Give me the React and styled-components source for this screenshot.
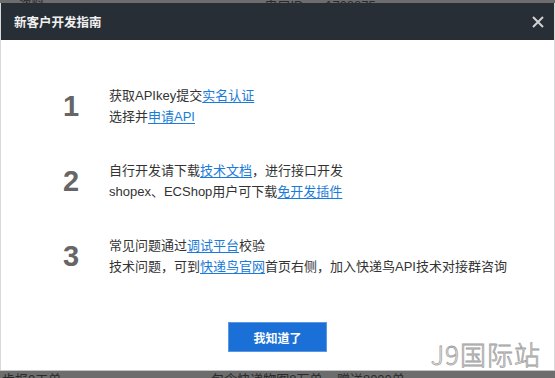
import React from "react";
import styled, { createGlobalStyle } from "styled-components";

const Global = createGlobalStyle`
  html, body { margin: 0; padding: 0; background: #6b6b6b; }
  body { font-family: "Liberation Sans", "Noto Sans CJK SC", sans-serif; }
  * { box-sizing: border-box; }
`;

const Page = styled.div`
  width: 555px;
  height: 378px;
  display: flex;
  flex-direction: column;
  overflow: hidden;
  position: relative;
`;

const Strip = styled.div`
  height: ${(p) => p.$h}px;
  min-height: 0;
  flex: none;
  background: #6d6d6d;
  overflow: hidden;
  display: flex;
  align-items: ${(p) => (p.$top ? "flex-end" : "flex-start")};
  border-top: ${(p) => (p.$top ? "none" : "1px solid #c4c4c4")};
  font-size: 13px;
  line-height: 13px;
  color: #2a2a2a;
  white-space: nowrap;
`;

const StripText = styled.span`
  flex: none;
  margin-left: ${(p) => p.$ml}px;
  margin-bottom: ${(p) => (p.$top ? "-9px" : "0")};
  margin-top: ${(p) => (p.$top ? "0" : "2px")};
`;

const Dialog = styled.div`
  flex: 1;
  min-height: 0;
  display: flex;
  flex-direction: column;
  background: #fff;
  border-left: 1px solid #d9d9d9;
  border-right: 1px solid #d9d9d9;
`;

const Header = styled.div`
  height: 37px;
  flex: none;
  background: #282e36;
  display: flex;
  align-items: center;
  justify-content: space-between;
  padding: 0 8px 0 13px;
`;

const Title = styled.div`
  color: #f0f0f0;
  font-size: 12.5px;
  font-weight: bold;
  font-family: "Noto Sans CJK SC", sans-serif;
`;

const Close = styled.button`
  width: 16px;
  height: 16px;
  padding: 0;
  border: 0;
  background: none;
  display: flex;
  align-items: center;
  justify-content: center;
  cursor: pointer;
`;

const Body = styled.div`
  flex: 1;
  display: flex;
  flex-direction: column;
  padding: 45px 0 0 62px;
`;

const Steps = styled.div`
  display: flex;
  flex-direction: column;
  gap: 33px;
`;

const Step = styled.div`
  display: flex;
  align-items: center;
`;

const Num = styled.div`
  width: 46px;
  flex: none;
  font-family: "Liberation Sans", Arial, sans-serif;
  font-size: 29px;
  font-weight: bold;
  color: #666;
  line-height: 1;
`;

const Lines = styled.div`
  display: flex;
  flex-direction: column;
  font-size: 13px;
  line-height: 21px;
  color: #333;
  font-family: "Liberation Sans", "Noto Sans CJK SC", sans-serif;
  white-space: nowrap;
`;

const Link = styled.a`
  color: #1a7bd8;
  text-decoration: underline;
  text-underline-offset: 2px;
`;

const Footer = styled.div`
  display: flex;
  justify-content: center;
  margin-top: 45px;
  padding-right: 62px;
`;

const OkButton = styled.button`
  width: 99px;
  height: 30px;
  background: #1b70d8;
  border: 1px solid #5b97e3;
  color: #fff;
  font-size: 12px;
  font-weight: bold;
  font-family: "Noto Sans CJK SC", sans-serif;
  cursor: pointer;
`;

const Watermark = styled.div`
  position: absolute;
  right: 14px;
  bottom: 11px;
  font-family: "Noto Sans CJK SC", sans-serif;
  font-size: 26px;
  font-weight: 300;
  color: #fafafa;
  -webkit-text-stroke: 0.8px #a0a0a0;
  letter-spacing: 1px;
  line-height: 1;
`;

const steps = [
  {
    n: "1",
    lines: [
      ["获取APIkey提交", { link: "实名认证" }],
      ["选择并", { link: "申请API" }],
    ],
  },
  {
    n: "2",
    lines: [
      ["自行开发请下载", { link: "技术文档" }, "，进行接口开发"],
      ["shopex、ECShop用户可下载", { link: "免开发插件" }],
    ],
  },
  {
    n: "3",
    lines: [
      ["常见问题通过", { link: "调试平台" }, "校验"],
      ["技术问题，可到", { link: "快递鸟官网" }, "首页右侧，加入快递鸟API技术对接群咨询"],
    ],
  },
];

export default function App() {
  return (
    <Page>
      <Global />
      <Strip $h={3} $top>
        <StripText $top $ml={2}>▲ 资料</StripText>
        <StripText $top $ml={220}>串口ID:&nbsp;&nbsp;&nbsp;&nbsp;&nbsp;1768875</StripText>
      </Strip>
      <Dialog>
        <Header>
          <Title>新客户开发指南</Title>
          <Close aria-label="close">
            <svg width="12" height="12" viewBox="0 0 12 12">
              <path d="M1 1L11 11M11 1L1 11" stroke="#d0d2d4" strokeWidth="2" />
            </svg>
          </Close>
        </Header>
        <Body>
          <Steps>
            {steps.map((s) => (
              <Step key={s.n}>
                <Num>{s.n}</Num>
                <Lines>
                  {s.lines.map((parts, i) => (
                    <div key={i}>
                      {parts.map((p, j) =>
                        typeof p === "string" ? (
                          <span key={j}>{p}</span>
                        ) : (
                          <Link key={j}>{p.link}</Link>
                        )
                      )}
                    </div>
                  ))}
                </Lines>
              </Step>
            ))}
          </Steps>
          <Footer>
            <OkButton>我知道了</OkButton>
          </Footer>
        </Body>
      </Dialog>
      <Strip $h={8}>
        <StripText $ml={2}>步报0工单</StripText>
        <StripText $ml={150}>包含快递物图8万单&nbsp;&nbsp;&nbsp;&nbsp;赠送8000单</StripText>
      </Strip>
      <Watermark>J9国际站</Watermark>
    </Page>
  );
}
